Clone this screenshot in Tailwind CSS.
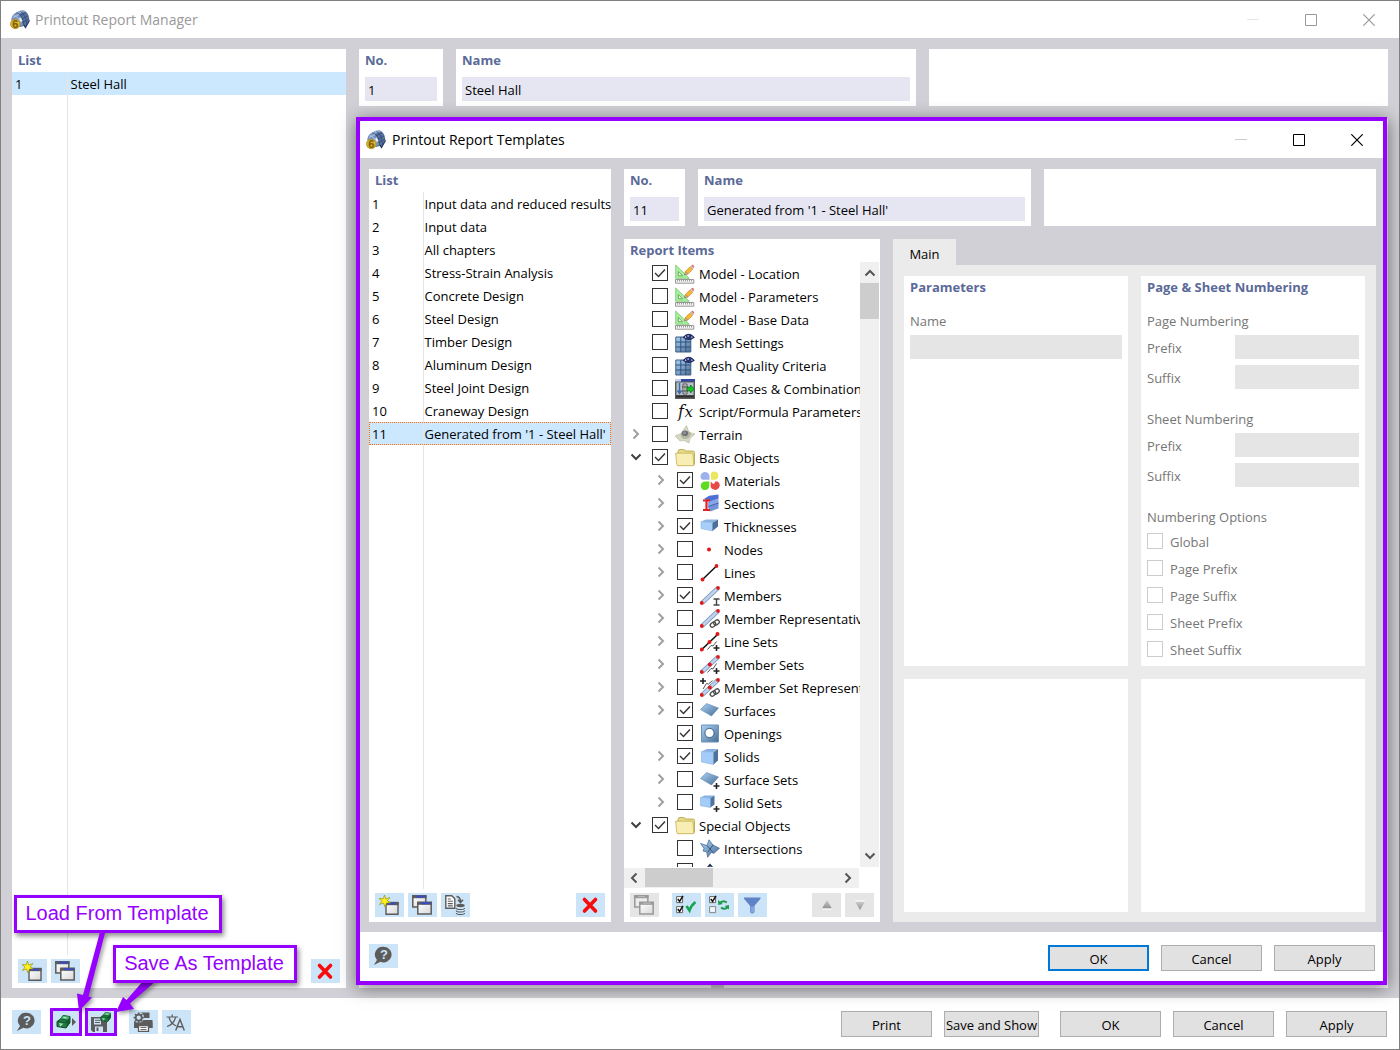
<!DOCTYPE html>
<html lang="en">
<head>
    <meta charset="UTF-8">
    <meta name="viewport" content="width=device-width, initial-scale=1.0">
    <title>Printout Report Manager</title>
    <script src="https://cdn.jsdelivr.net/npm/@tailwindcss/browser@4"></script>
</head>
<body class="font-['Open_Sans','Noto_Sans',sans-serif] text-[13px] leading-5 text-black">

<!-- Icons -->
<svg class="absolute size-0" aria-hidden="true">
    <defs>
        <linearGradient id="gBlue" x1="0" y1="0" x2="1" y2="1"><stop offset="0" stop-color="#a9d2f7"/><stop offset="1" stop-color="#4a6d92"/></linearGradient>
        <linearGradient id="gWin" x1="0" y1="0" x2="1" y2="1"><stop offset="0" stop-color="#ffffff"/><stop offset="1" stop-color="#d8d8d8"/></linearGradient>
        <linearGradient id="gGray" x1="0" y1="0" x2="0" y2="1"><stop offset="0" stop-color="#cfcfcf"/><stop offset="1" stop-color="#8f8f8f"/></linearGradient>
        <g id="link"><g fill="none" stroke="#4a4a4a" stroke-width="1.3"><rect x="10" y="13.600" width="6" height="4" rx="2" transform="rotate(-40 13 15.600)"/><rect x="13.500" y="11.500" width="6" height="4" rx="2" transform="rotate(-40 16.500 13.500)"/></g></g>
        <g id="plus"><path d="M16.500 13v6M13.500 16h6" stroke="#222" stroke-width="1.600"/></g>
        <symbol id="i-app" viewBox="0 0 20 20">
            <path d="M1.500 10Q2 4.500 6 2.700Q9.500 .2 14 .5Q18.500 2 19.500 10.500L15.500 17.500L14 16L10 17L2 11z" fill="#56719f"/>
            <path d="M1.500 10Q2 4.500 6 2.700Q11.500 3.500 13 15L10 16.500L3 12z" fill="#7793c0"/>
            <path d="M6 2.700Q9.500 .2 14 .5L16 1.800Q11.500 2.200 8.500 4.200z" fill="#8fabd4"/>
            <path d="M6.500 2.800Q12.500 4 14 15.500M10.500 1.200Q15.500 4.500 16.800 14.500M9.500 6l6.500-3.300M11.500 9.200l6.800-3.500M12.500 12.500l6.500-3.500" stroke="#34466b" stroke-width=".7" fill="none"/>
            <path d="M4 5.500Q9 7 10 13M3 7.500l6-3" stroke="#b9cdea" stroke-width=".8" fill="none"/>
            <path d="M10 8l1.500 3.500" stroke="#e6eefa" stroke-width="2"/>
            <path d="M14 15l1.500 2.500 4-7" fill="none" stroke="#2a3a5a" stroke-width="1.200"/>
            <circle cx="5.300" cy="14" r="5" fill="#dcb52f"/><circle cx="5.300" cy="14" r="4.700" fill="none" stroke="#a08018" stroke-width=".6"/>
            <text x="5.300" y="18" font-size="11" font-weight="700" text-anchor="middle" fill="#7a5c08" font-family="Liberation Sans, sans-serif">6</text>
        </symbol>
        <symbol id="i-model" viewBox="0 0 20 20">
            <path d="M.7 1v13.300h13.600z" fill="#a5f29a" stroke="#7cc275" stroke-width=".8"/><path d="M3.300 7.600v4.200h4.300z" fill="#fff" stroke="#5e9c58" stroke-width=".9"/>
            <path d="M.5 15.500h18.300v3.700H.5z" fill="#f4f4f4" stroke="#8c8c8c" stroke-width=".9"/><path d="M2.500 16v1.500M4.500 16v1.500M6.500 16v1.500M8.500 16v1.500M10.500 16v1.500M12.500 16v1.500M14.500 16v1.500M16.500 16v1.500" stroke="#777" stroke-width=".7"/>
            <path d="M9.300 11l1-3.500 2.700 2.600z" fill="#d9b48a" stroke="#5c4630" stroke-width=".4"/><path d="M10.300 7.500L15 2.700l2.700 2.600-4.700 4.800z" fill="#f7b733" stroke="#a8761a" stroke-width=".5"/>
            <path d="M15 2.700l1.200-1.200 2.700 2.600-1.200 1.200z" fill="#c9b9b9"/><path d="M16.200 1.500q1.200-1.200 2.400-.1t.3 2.700z" fill="#e66a6a"/>
        </symbol>
        <symbol id="i-mesh" viewBox="0 0 20 20">
            <path d="M.8 4h15v15h-15z" fill="url(#gBlue)" stroke="#3c5d86"/><path d="M5.800 4v15M10.800 4v15M.8 9h15M.8 14h15" stroke="#31517a" stroke-width="1"/>
            <path d="M8.500 4.300Q13.700-1.500 19 4.300Q13.700 8.500 8.500 4.300z" fill="#fff" stroke="#1b2354" stroke-width="1.200"/><circle cx="13.800" cy="3.700" r="2.800" fill="#27336f"/><circle cx="13.200" cy="3.100" r="1" fill="#8fa0e0"/>
        </symbol>
        <symbol id="i-load" viewBox="0 0 20 20">
            <path d="M0 0h20v20H0z" fill="#5c5c5c"/><path d="M1.500 3.500h17v12.500h-17z" fill="#b9c3cc"/><path d="M0 0h20v2.500H0z" fill="#3347a5"/><path d="M0 0h6v2.500H0z" fill="#c9d0e8"/>
            <path d="M4.500 4v10M2.500 11.500l2 3 2-3" stroke="#3a6ea5" stroke-width="1.500" fill="none"/><path d="M8 5h4v10H8z" fill="#e6e6e6" stroke="#333" stroke-width=".8"/><path d="M10 6v8M7 8h6M7 12h6" stroke="#333" stroke-width=".7"/>
            <path d="M12 8h3.500V6l4 4-4 4v-2H12z" fill="#12c427" stroke="#075c11" stroke-width=".6"/><path d="M1 17.500h18" stroke="#303030" stroke-width="2"/>
        </symbol>
        <symbol id="i-fx" viewBox="0 0 20 20"><text x="3" y="14.500" font-size="16" font-style="italic" fill="#111" font-family="DejaVu Serif, serif">f</text><text x="9.500" y="14.500" font-size="15" font-style="italic" fill="#111" font-family="DejaVu Serif, serif">x</text></symbol>
        <symbol id="i-terrain" viewBox="0 0 20 20">
            <path d="M0 11l6-2.500L11.500.5l2.500 7L20 9l-5 4.500L14 18l-5-2.500-4 .5z" fill="#d5d8c4" stroke="#b3b7a0" stroke-width=".6"/><path d="M5.500 10q2-5 7-4t3 4.500-5.500 3.500-4.500-4z" fill="#b2b6a0"/><ellipse cx="10" cy="8.300" rx="3.200" ry="2.800" fill="#6d7072"/><ellipse cx="9.500" cy="8" rx="1.500" ry="1.400" fill="#8c93a0"/>
        </symbol>
        <symbol id="i-folder" viewBox="0 0 20 20">
            <path d="M3 17.500V3.500q0-2 2-2h3.500q1.500 0 2 1.500H18q1.500 0 1.500 1.500v12z" fill="#e6d98a" stroke="#b9a94e" stroke-width=".9"/><path d="M.6 5.200h16.200q1 0 1.100 1l1 11.500H3q-1 0-1.200-1z" fill="#f8eeb4" stroke="#c8b95e" stroke-width=".9"/>
        </symbol>
        <symbol id="i-materials" viewBox="0 0 20 20">
            <path d="M2 8.800A4.500 4.500 0 1 1 9.500 6v2.800z" fill="#9db1ec"/><path d="M11 8.800V2.500Q11.500.5 14 .5a4.200 4.200 0 0 1 1 8.300z" fill="#ece659"/><path d="M9.300 10.500v4a4.300 4.300 0 1 1-4.200-4z" fill="#5fdc22"/><path d="M10.700 10.500l2.500 2.500q1.800-.5 2-2.500h2.300a4.500 4.500 0 1 1-6.800 3z" fill="#e84a48"/>
        </symbol>
        <symbol id="i-sections" viewBox="0 0 20 20">
            <path d="M4 5L9 1.800l9.500-1.300v4L10 8z" fill="#4f6fd6"/><path d="M8 8l10.500-3.500v6L8 13z" fill="#86a6e8"/><path d="M8 13l10.500-3.500v5L10 17.500z" fill="#7295d8"/><path d="M8.500 12.500l10-3.500" stroke="#3f5db8"/>
            <path d="M3 6.500h7M3 16h7M6.500 6v10" stroke="#e32222" stroke-width="2.200"/>
        </symbol>
        <symbol id="i-thick" viewBox="0 0 20 20">
            <path d="M1 4.500L6 2.500h12l-5.500 3.300z" fill="#8eb4e2"/><path d="M1 4.500l11.500 1.300v8.200L1 11.500z" fill="#a7cffc" stroke="#7fa8d8" stroke-width=".5"/><path d="M12.500 5.800L18 2.500v7L12.500 14z" fill="#4d6f98"/>
        </symbol>
        <symbol id="i-nodes" viewBox="0 0 20 20"><circle cx="9" cy="9.500" r="2" fill="#e01818"/></symbol>
        <symbol id="i-lines" viewBox="0 0 20 20"><path d="M2.500 16.500L16.500 3" stroke="#111" stroke-width="1.500"/><circle cx="2.500" cy="16.500" r="1.900" fill="#e01818"/><circle cx="16.500" cy="3" r="1.900" fill="#e01818"/></symbol>
        <symbol id="i-bar" viewBox="0 0 20 20"><path d="M2 17L18 2" stroke="#7088ad" stroke-width="4.400"/><path d="M2 17L18 2" stroke="#bdd3f0" stroke-width="3"/><circle cx="1.800" cy="17" r="1.900" fill="#e01818"/><circle cx="18" cy="1.900" r="1.900" fill="#e01818"/></symbol>
        <symbol id="i-members" viewBox="0 0 20 20"><use href="#i-bar" width="20" height="20"/><path d="M13.500 13h6M13.500 19h6M16.500 13v6" stroke="#444" stroke-width="1.400"/></symbol>
        <symbol id="i-memrep" viewBox="0 0 20 20"><use href="#i-bar" width="20" height="20"/><use href="#link"/></symbol>
        <symbol id="i-linesets" viewBox="0 0 20 20"><path d="M1.800 17.500L17.500 2.500" stroke="#111" stroke-width="1.600"/><path d="M7.500 17.500l3.500-4 2 .5 3.500-4.500" stroke="#555" stroke-width="1" fill="none"/><circle cx="1.800" cy="17.500" r="2" fill="#e01818"/><circle cx="9.500" cy="10" r="2" fill="#e01818"/><circle cx="17.500" cy="2" r="2" fill="#e01818"/><use href="#plus"/></symbol>
        <symbol id="i-memsets" viewBox="0 0 20 20"><use href="#i-bar" width="20" height="20"/><circle cx="9.800" cy="9.600" r="2" fill="#e01818"/><path d="M7.500 17.500l3.500-4 2 .5 3.500-5.500" stroke="#555" stroke-width="1" fill="none"/><use href="#plus"/></symbol>
        <symbol id="i-memsetrep" viewBox="0 0 20 20"><use href="#i-bar" width="20" height="20"/><circle cx="9.800" cy="9.600" r="2" fill="#e01818"/><path d="M3 0v6M0 3h6" stroke="#222" stroke-width="1.600"/><path d="M3 11l3.500-5.500 2 .5 4-3.500" stroke="#555" stroke-width="1" fill="none"/><use href="#link"/></symbol>
        <symbol id="i-surface" viewBox="0 0 20 20"><path d="M.5 8.500L6.500 2.500l12 4.500-7 8z" fill="url(#gBlue)" stroke="#5f86b4" stroke-width=".6"/></symbol>
        <symbol id="i-opening" viewBox="0 0 20 20"><path d="M1.500 1h17v17h-17z" fill="url(#gBlue)" stroke="#6d93bd"/><circle cx="9.500" cy="9" r="4.600" fill="#fff" stroke="#3f618a"/></symbol>
        <symbol id="i-solid" viewBox="0 0 20 20"><path d="M1.500 4.500L7 2h11l-4.500 3z" fill="#86b0e2"/><path d="M1.500 4.500l12 .7v12.300l-12-2.500z" fill="#a3ccfb" stroke="#7ba4d4" stroke-width=".5"/><path d="M13.500 5.200L18 2v11.500l-4.500 4z" fill="#4f739f"/></symbol>
        <symbol id="i-surfsets" viewBox="0 0 20 20"><use href="#i-surface" width="20" height="20"/><use href="#plus"/></symbol>
        <symbol id="i-solidsets" viewBox="0 0 20 20"><path d="M.5 4.500L4.500 2.500h10l-4 2.500z" fill="#86b0e2"/><path d="M.5 4.500l10 .5v9.500l-10-1.800z" fill="#a3ccfb" stroke="#7ba4d4" stroke-width=".5"/><path d="M10.500 5l4-2.500v9l-4 3z" fill="#4f739f"/><use href="#plus"/></symbol>
        <symbol id="i-inter" viewBox="0 0 20 20"><path d="M.5 4.500l6.500 2L9 .8l4 5.200 6.500 3.300-5.500 5-2.800-.8-3.500 4.800-1-5.300-3.700-1L4 9.500z" fill="url(#gBlue)" stroke="#3f638f" stroke-width=".7"/><path d="M7 6.500l6 7M8 13l5-7" stroke="#2f4f78" stroke-width=".9"/></symbol>
        <symbol id="i-next" viewBox="0 0 20 20"><path d="M10 1.500l-3 3.500h6z" fill="#222b40"/><path d="M10 4v12" stroke="#4b6fa0" stroke-width="3"/></symbol>

        <symbol id="b-new" viewBox="0 0 20 20"><path d="M7 8h12v11.300H7z" fill="url(#gWin)" stroke="#5b5b5b" stroke-width="1.400"/><path d="M6.300 6.800h13.400v3.400H6.300z" fill="#5b5b5b"/><path d="M8.500 7.500h8v2h-8z" fill="#3a4cc0"/><path d="M5.500 0l1.200 4 4.300-1.500L8.200 5.800l3.300 2-4 .2L6 12 4.500 8l-4 1.500L3 6.200 0 3.500l4.200.3z" fill="#fff21a" stroke="#8c8400" stroke-width=".6"/></symbol>
        <symbol id="b-copy" viewBox="0 0 20 20"><path d="M.8 1h13v11H.8z" fill="url(#gWin)" stroke="#5b5b5b" stroke-width="1.500"/><path d="M.1 0h14.500v3.200H.1z" fill="#5b5b5b"/><path d="M4 .6h9v2H4z" fill="#3a4cc0"/><path d="M5.800 8h13.400v11H5.800z" fill="url(#gWin)" stroke="#5b5b5b" stroke-width="1.500"/><path d="M5.100 6.500H20v3.300H5.100z" fill="#5b5b5b"/><path d="M9 7.200h9.500v2H9z" fill="#3a4cc0"/></symbol>
        <symbol id="b-copyoff" viewBox="0 0 20 20"><path d="M.8 1h13v11H.8z" fill="#ececec" stroke="#999" stroke-width="1.500"/><path d="M.1 0h14.500v3.200H.1z" fill="#999"/><path d="M5.800 8h13.400v11H5.800z" fill="url(#gWin)" stroke="#999" stroke-width="1.500"/><path d="M5.100 6.500H20v3.300H5.100z" fill="#999"/><path d="M4 1.600h7M9 8.200h8" stroke="#bbb"/></symbol>
        <symbol id="b-docdb" viewBox="0 0 20 20"><path d="M.8.8h6l3 3v9.500h-9z" fill="#fff" stroke="#5b5b5b" stroke-width="1.400"/><path d="M2.800 4h3M2.800 6.300h5M2.800 8.600h5M2.800 10.900h5" stroke="#5b5b5b" stroke-width="1.100"/><path d="M11.500 1.500q4 .5 4 5M13 4.800l2.500 2.800 2.500-2.800" fill="none" stroke="#5b5b5b" stroke-width="1.500"/><ellipse cx="15.500" cy="10.500" rx="4.200" ry="1.700" fill="#5b5b5b"/><path d="M11.300 13q0 1.500 4.200 1.500t4.200-1.500M11.300 15.500q0 1.500 4.200 1.500t4.200-1.500M11.300 18q0 1.500 4.200 1.500t4.200-1.500" fill="none" stroke="#5b5b5b" stroke-width="1.100"/></symbol>
        <symbol id="b-delete" viewBox="0 0 20 20"><path d="M4.500 4.500l11 11.500M15.500 4.500L4.500 16" stroke="#f60c0c" stroke-width="3.600" stroke-linecap="round"/></symbol>
        <symbol id="b-checkall" viewBox="0 0 20 20"><path d="M.6 1.600h6v6h-6zM.6 11.600h6v6h-6z" fill="#fff" stroke="#666"/><path d="M1.800 4l1.800 2.500L7 .8M1.800 14l1.800 2.500L7 10.800" fill="none" stroke="#111" stroke-width="1.500"/><path d="M10.500 11l3 4.500q1.500-5 6-8.500" fill="none" stroke="#14a550" stroke-width="2.600"/></symbol>
        <symbol id="b-toggle" viewBox="0 0 20 20"><path d="M.6 1.600h6v6h-6z" fill="#fff" stroke="#666"/><path d="M.6 11.600h6v6h-6z" fill="#eef4fa" stroke="#888"/><path d="M1.800 4l1.800 2.500L7 .8" fill="none" stroke="#111" stroke-width="1.500"/><path d="M10.300 8.500q3.500-4 7.500-1M19.500 11.500q-3.500 4-7.500 1" fill="none" stroke="#1a9c4c" stroke-width="2"/><path d="M9 5l.3 5 4.500-1zM20.500 15l-.3-5-4.500 1z" fill="#1a9c4c"/></symbol>
        <symbol id="b-filter" viewBox="0 0 20 20"><path d="M2 2.500h16.500v1.300l-6 7V17q-2.300 3-4.500 0v-6.200l-6-7z" fill="#5f83c4"/><path d="M8.500 11.500h3.500V17q-1.700 1.700-3.500 0z" fill="#86a6e2"/></symbol>
        <symbol id="b-up" viewBox="0 0 20 20"><path d="M10 5l5 8.500H5z" fill="url(#gGray)"/><path d="M5 14h10" stroke="#fff"/></symbol>
        <symbol id="b-down" viewBox="0 0 20 20"><path d="M10 15L5 6.500h10z" fill="url(#gGray)"/><path d="M5 6h10" stroke="#fff"/></symbol>
        <symbol id="b-help" viewBox="0 0 20 20"><path d="M10.800.8a8 7.800 0 1 1-3.300 15L.8 19l3.200-5A7.900 7.900 0 0 1 10.800.8z" fill="#5c5c5c"/><text x="11" y="13.400" font-size="13" font-weight="700" text-anchor="middle" fill="#cce4f7" font-family="Liberation Sans, sans-serif">?</text></symbol>
        <g id="brick"><path d="M1 8.500L4.500 6l2.500-3.500 7 1v6L10 15 1 13.500z" fill="#1f7c40" stroke="#0e4d26"/><path d="M4.500 6L7 2.700l7 1L11 7z" fill="#4fb374"/><path d="M10.500 9L14 4v6L10.500 14.500z" fill="#14572c"/><path d="M1.500 8.500l8.500 1M4.500 6l6.500 1v2" stroke="#0e4d26" stroke-width=".8" fill="none"/><path d="M3 10.800l3 .4-2.300 1.900M7.500 4.500l3 .5" stroke="#c9f0d4" stroke-width="1.100" fill="none"/></g>
        <symbol id="b-load" viewBox="0 0 20 20"><use href="#brick" x="0" y="1"/><path d="M16 6l4 4-4 4z" fill="#5c5c5c"/></symbol>
        <symbol id="b-save" viewBox="0 0 20 20"><path d="M0 5h11v3.500h5V20H2l-2-2z" fill="#5c5c5c"/><path d="M3 6.500h7v6H3z" fill="#cce4f7"/><path d="M4 8.300h5M4 10.500h5" stroke="#5c5c5c"/><path d="M4 14.500h8V20H4z" fill="#cce4f7"/><path d="M5.500 15.500h2V19h-2z" fill="#5c5c5c"/><g transform="translate(9 -1.500) scale(.75)"><use href="#brick"/></g></symbol>
        <symbol id="b-printer" viewBox="0 0 20 20"><path d="M7 .5h9.500V6H7z" fill="#5c5c5c"/><path d="M1 8h18.500v8H16v-3H5v3H1z" fill="#5c5c5c"/><circle cx="5.500" cy="5.500" r="5.500" fill="#cce4f7"/><path d="M1 10.500h18.500V16H16v-3H5v3H1z" fill="#5c5c5c"/><path d="M5.500 13.500h10v6h-10z" fill="#fff" stroke="#5c5c5c" stroke-width="1.300"/><path d="M7.500 15.500h6M7.500 17.500h6" stroke="#5c5c5c" stroke-width=".9"/><circle cx="5.700" cy="5.700" r="3" fill="none" stroke="#5c5c5c" stroke-width="1.800"/><path d="M5.700.6v1.800M5.700 9v1.800M.6 5.700h1.800M9 5.700h1.800M2.100 2.100l1.200 1.200M8.100 8.100l1.200 1.200M9.300 2.100L8.100 3.300M3.300 8.100L2.100 9.300" stroke="#5c5c5c" stroke-width="1.800"/></symbol>
        <symbol id="b-lang" viewBox="0 0 20 20"><path d="M.5 5h11.500M6.200 2.500V5M3 5.500q2 6.500 7.500 8.500M9.500 5.500Q8 12 1 14.500" fill="none" stroke="#5c5c5c" stroke-width="1.200"/><path d="M9.700 18.500l4.300-11 4.300 11M11.200 14.800h5.600" fill="none" stroke="#5c5c5c" stroke-width="1.400"/></symbol>
        <symbol id="c-min" viewBox="0 0 12 12"><path d="M0 5.500h12" stroke="currentColor"/></symbol>
        <symbol id="c-max" viewBox="0 0 12 12"><path d="M.5.5h11v11H.5z" fill="none" stroke="currentColor"/></symbol>
        <symbol id="c-close" viewBox="0 0 12 12"><path d="M.3.3l11.400 11.400M11.700.3L.3 11.700" stroke="currentColor" stroke-width="1.200"/></symbol>
        <symbol id="chev" viewBox="0 0 12 12"><path d="M3.500 1.500L8 6l-4.500 4.500" fill="none" stroke="currentColor" stroke-width="2"/></symbol>
    </defs>
</svg>

<div class="relative flex min-h-screen flex-col border border-[#808080] bg-white">

    <header class="flex h-[37px] items-center pr-1 pl-[9px]">
        <svg class="size-5"><use href="#i-app"/></svg>
        <h1 class="ml-[5px] flex-1 text-[14px] text-[#999]">Printout Report Manager</h1>
        <div class="flex gap-1.5 text-[#999]">
            <button class="grid h-[34px] w-[52px] place-items-center text-[#e5e5e5]" aria-label="Minimize"><svg class="size-3"><use href="#c-min"/></svg></button>
            <button class="grid h-[34px] w-[52px] place-items-center" aria-label="Maximize"><svg class="size-3"><use href="#c-max"/></svg></button>
            <button class="grid h-[34px] w-[52px] place-items-center" aria-label="Close"><svg class="size-3"><use href="#c-close"/></svg></button>
        </div>
    </header>

    <main class="flex flex-1 gap-[13px] bg-[#d1d0d6] px-[11px] pt-[11px] pb-2.5">
        <section class="flex w-[334px] flex-col bg-white">
            <h2 class="h-[23px] px-1.5 leading-[23px] font-bold text-[#5b6a98]">List</h2>
            <div class="flex flex-1">
                <table class="w-full table-fixed">
                    <tbody>
                        <tr class="h-[23px] bg-[#cce8ff]"><td class="w-[55px] pl-[3px]">1</td><td class="border-l border-[#e5e5e5] pl-[3px]">Steel Hall</td></tr>
                        <tr><td></td><td class="border-l border-[#e5e5e5]"></td></tr>
                    </tbody>
                </table>
            </div>
            <div class="flex gap-1 px-1.5 pt-1 pb-[5px]">
                <button class="grid h-6 w-[29px] place-items-center bg-[#cce4f7] pr-px" aria-label="New report"><svg class="size-5"><use href="#b-new"/></svg></button>
                <button class="grid h-6 w-[29px] place-items-center bg-[#cce4f7] pr-px" aria-label="Copy report"><svg class="size-5"><use href="#b-copy"/></svg></button>
                <button class="ml-auto grid h-6 w-[29px] place-items-center bg-[#cce4f7] pr-px" aria-label="Delete report"><svg class="size-5"><use href="#b-delete"/></svg></button>
            </div>
        </section>
        <div class="flex flex-1 flex-col gap-[13px]">
            <div class="grid grid-cols-[84px_1fr_1fr] gap-[13px]">
                <div class="bg-white px-1.5 pb-[5px]">
                    <label for="no" class="block h-7 leading-[23px] font-bold text-[#5b6a98]">No.</label>
                    <input id="no" type="text" value="1" class="block h-6 w-full bg-[#e6e6f2] pt-0.5 pl-[3px]">
                </div>
                <div class="bg-white px-1.5 pb-[5px]">
                    <label for="name" class="block h-7 leading-[23px] font-bold text-[#5b6a98]">Name</label>
                    <input id="name" type="text" value="Steel Hall" class="block h-6 w-full bg-[#e6e6f2] pt-0.5 pl-[3px]">
                </div>
                <div class="bg-white"></div>
            </div>
            <div class="flex flex-1 gap-[13px]">
                <div class="w-[352px] bg-white"></div>
                <div class="flex-1 bg-white"></div>
            </div>
        </div>
    </main>

    <footer class="flex h-[51px] items-center bg-white pr-3 pb-[3px] pl-[11px]">
        <button class="grid h-6 w-[29px] place-items-center bg-[#cce4f7] pr-px" aria-label="Help"><svg class="size-5"><use href="#b-help"/></svg></button>
        <button class="ml-[9px] grid h-7 w-8 place-items-center border-3 border-[#9600ff] bg-[#cce4f7]" aria-label="Load from template"><svg class="size-5"><use href="#b-load"/></svg></button>
        <button class="ml-[3px] grid h-7 w-8 place-items-center border-3 border-[#9600ff] bg-[#cce4f7]" aria-label="Save as template"><svg class="size-5"><use href="#b-save"/></svg></button>
        <button class="ml-3 grid h-6 w-[29px] place-items-center bg-[#cce4f7] pr-px" aria-label="Print settings"><svg class="size-5"><use href="#b-printer"/></svg></button>
        <button class="ml-1 grid h-6 w-[29px] place-items-center bg-[#cce4f7] pr-px" aria-label="Language"><svg class="size-5"><use href="#b-lang"/></svg></button>
        <div class="ml-auto flex gap-3 pt-1">
            <button class="h-[26px] w-[91px] border border-[#adadad] bg-[#e1e1e1] pt-0.5">Print</button>
            <button class="mr-[9px] h-[26px] w-[95px] border border-[#adadad] bg-[#e1e1e1] pt-0.5 whitespace-nowrap">Save and Show</button>
            <button class="h-[26px] w-[101px] border border-[#adadad] bg-[#e1e1e1] pt-0.5">OK</button>
            <button class="h-[26px] w-[101px] border border-[#adadad] bg-[#e1e1e1] pt-0.5">Cancel</button>
            <button class="h-[26px] w-[101px] border border-[#adadad] bg-[#e1e1e1] pt-0.5">Apply</button>
        </div>
    </footer>

    <!-- Templates dialog -->
    <div role="dialog" aria-labelledby="dlg-title" class="absolute top-[116px] right-3 bottom-16 left-[355px] flex flex-col border-4 border-[#9600ff] bg-white shadow-[1px_3px_16px_rgba(0,0,0,0.5)]">
        <header class="flex h-[37px] items-center pl-1.5">
            <svg class="size-5"><use href="#i-app"/></svg>
            <h1 id="dlg-title" class="ml-1.5 flex-1 text-[14px]">Printout Report Templates</h1>
            <div class="flex gap-1.5">
                <button class="grid h-[34px] w-[52px] place-items-center text-[#ccc]" aria-label="Minimize"><svg class="size-3"><use href="#c-min"/></svg></button>
                <button class="grid h-[34px] w-[52px] place-items-center" aria-label="Maximize"><svg class="size-3"><use href="#c-max"/></svg></button>
                <button class="grid h-[34px] w-[52px] place-items-center" aria-label="Close"><svg class="size-3"><use href="#c-close"/></svg></button>
            </div>
        </header>

        <div class="flex min-h-0 flex-1 gap-[13px] bg-[#d1d0d6] pt-[11px] pr-[7px] pb-2.5 pl-[9px]">
            <section class="flex w-[242px] flex-col bg-white">
                <h2 class="h-[23px] px-1.5 leading-[23px] font-bold text-[#5b6a98]">List</h2>
                <div class="flex flex-1">
                    <table class="w-full table-fixed">
                        <tbody id="templates"></tbody>
                    </table>
                </div>
                <div class="flex gap-1 px-1.5 pt-1 pb-[5px]">
                    <button class="grid h-6 w-[29px] place-items-center bg-[#cce4f7] pr-px" aria-label="New template"><svg class="size-5"><use href="#b-new"/></svg></button>
                    <button class="grid h-6 w-[29px] place-items-center bg-[#cce4f7] pr-px" aria-label="Copy template"><svg class="size-5"><use href="#b-copy"/></svg></button>
                    <button class="grid h-6 w-[29px] place-items-center bg-[#cce4f7] pr-px" aria-label="Save to database"><svg class="size-5"><use href="#b-docdb"/></svg></button>
                    <button class="ml-auto grid h-6 w-[29px] place-items-center bg-[#cce4f7] pr-px" aria-label="Delete template"><svg class="size-5"><use href="#b-delete"/></svg></button>
                </div>
            </section>

            <div class="flex min-h-0 min-w-0 flex-1 flex-col gap-[13px]">
                <div class="grid grid-cols-[61px_1fr_1fr] gap-[13px]">
                    <div class="bg-white px-1.5 pb-[5px]">
                        <label for="tno" class="block h-7 leading-[23px] font-bold text-[#5b6a98]">No.</label>
                        <input id="tno" type="text" value="11" class="block h-6 w-full bg-[#e6e6f2] pt-0.5 pl-[3px]">
                    </div>
                    <div class="bg-white px-1.5 pb-[5px]">
                        <label for="tname" class="block h-7 leading-[23px] font-bold text-[#5b6a98]">Name</label>
                        <input id="tname" type="text" value="Generated from '1 - Steel Hall'" class="block h-6 w-full bg-[#e6e6f2] pt-0.5 pl-[3px]">
                    </div>
                    <div class="bg-white"></div>
                </div>

                <div class="flex min-h-0 flex-1 gap-[13px]">
                    <section class="flex w-[256px] flex-col bg-white">
                        <h2 class="h-[23px] px-1.5 leading-[23px] font-bold text-[#5b6a98]">Report Items</h2>
                        <div class="flex min-h-0 flex-1 pr-px">
                            <ul id="tree" class="min-w-0 flex-1 overflow-hidden"></ul>
                            <div class="flex w-[19px] flex-col bg-[#f0f0f0]">
                                <button class="grid h-[21px] place-items-center text-[#555]" aria-label="Scroll up"><svg class="size-3 -rotate-90"><use href="#chev"/></svg></button>
                                <div class="h-9 bg-[#cdcdcd]"></div>
                                <button class="mt-auto grid h-[22px] place-items-center text-[#555]" aria-label="Scroll down"><svg class="size-3 rotate-90"><use href="#chev"/></svg></button>
                            </div>
                        </div>
                        <div class="mt-px mr-[21px] flex h-5 bg-[#f0f0f0]">
                            <button class="grid w-[21px] place-items-center pr-0.5 text-[#555]" aria-label="Scroll left"><svg class="size-3 rotate-180"><use href="#chev"/></svg></button>
                            <div class="h-[19px] w-[68px] bg-[#cdcdcd]"></div>
                            <button class="ml-auto grid w-[21px] place-items-center pr-0.5 text-[#555]" aria-label="Scroll right"><svg class="size-3"><use href="#chev"/></svg></button>
                        </div>
                        <div class="flex gap-1 px-1.5 py-[5px]">
                            <button class="mr-[9px] grid h-6 w-[29px] place-items-center bg-[#e5e5e5] pr-px" aria-label="Copy item" disabled><svg class="size-5"><use href="#b-copyoff"/></svg></button>
                            <button class="grid h-6 w-[29px] place-items-center bg-[#cce4f7] pr-px" aria-label="Check all"><svg class="size-5"><use href="#b-checkall"/></svg></button>
                            <button class="grid h-6 w-[29px] place-items-center bg-[#cce4f7] pr-px" aria-label="Invert selection"><svg class="size-5"><use href="#b-toggle"/></svg></button>
                            <button class="grid h-6 w-[29px] place-items-center bg-[#cce4f7] pr-px" aria-label="Filter"><svg class="size-5"><use href="#b-filter"/></svg></button>
                            <button class="ml-auto grid h-6 w-[29px] place-items-center bg-[#e5e5e5]" aria-label="Move up" disabled><svg class="size-5"><use href="#b-up"/></svg></button>
                            <button class="grid h-6 w-[29px] place-items-center bg-[#e5e5e5]" aria-label="Move down" disabled><svg class="size-5"><use href="#b-down"/></svg></button>
                        </div>
                    </section>

                    <section class="flex min-w-0 flex-1 flex-col">
                        <div class="flex"><button role="tab" class="h-[26px] w-[63px] bg-[#ebebeb] pt-1">Main</button></div>
                        <div class="grid flex-1 grid-cols-2 grid-rows-[390px_1fr] gap-[13px] bg-[#ebebeb] px-[11px] pt-[11px] pb-2.5 text-[#767676]">
                            <div class="bg-white px-1.5">
                                <h3 class="h-[23px] leading-[23px] font-bold text-[#5b6a98]">Parameters</h3>
                                <label for="pname" class="mt-3 block h-6">Name</label>
                                <input id="pname" type="text" class="block h-6 w-full bg-[#e5e5e5]" disabled>
                            </div>
                            <div class="bg-white px-1.5">
                                <h3 class="h-[23px] leading-[23px] font-bold text-[#5b6a98]">Page &amp; Sheet Numbering</h3>
                                <h4 class="mt-3 h-6">Page Numbering</h4>
                                <div class="flex flex-col gap-1.5">
                                    <div class="flex h-6"><label for="pp" class="w-[88px] leading-[26px]">Prefix</label><input id="pp" type="text" class="h-6 min-w-0 flex-1 bg-[#e5e5e5]" disabled></div>
                                    <div class="flex h-6"><label for="ps" class="w-[88px] leading-[26px]">Suffix</label><input id="ps" type="text" class="h-6 min-w-0 flex-1 bg-[#e5e5e5]" disabled></div>
                                </div>
                                <h4 class="mt-5 h-6">Sheet Numbering</h4>
                                <div class="flex flex-col gap-1.5">
                                    <div class="flex h-6"><label for="sp" class="w-[88px] leading-[26px]">Prefix</label><input id="sp" type="text" class="h-6 min-w-0 flex-1 bg-[#e5e5e5]" disabled></div>
                                    <div class="flex h-6"><label for="ss" class="w-[88px] leading-[26px]">Suffix</label><input id="ss" type="text" class="h-6 min-w-0 flex-1 bg-[#e5e5e5]" disabled></div>
                                </div>
                                <h4 class="mt-5 h-5">Numbering Options</h4>
                                <div id="options"></div>
                            </div>
                            <div class="bg-white"></div>
                            <div class="bg-white"></div>
                        </div>
                    </section>
                </div>
            </div>
        </div>

        <footer class="flex h-[49px] items-center bg-white pr-2 pb-px pl-[9px]">
            <button class="grid h-6 w-[29px] place-items-center bg-[#cce4f7] pr-px" aria-label="Help"><svg class="size-5"><use href="#b-help"/></svg></button>
            <div class="ml-auto flex gap-3 pt-1">
                <button class="h-[26px] w-[101px] border-2 border-[#0078d7] bg-[#e1e1e1] pt-0.5">OK</button>
                <button class="h-[26px] w-[101px] border border-[#adadad] bg-[#e1e1e1] pt-0.5">Cancel</button>
                <button class="h-[26px] w-[101px] border border-[#adadad] bg-[#e1e1e1] pt-0.5">Apply</button>
            </div>
        </footer>
    </div>

    <!-- Callouts -->
    <div class="absolute bottom-[116px] left-[13px] h-[38px] w-[208px] border-3 border-[#9600ff] bg-white pr-0.5 text-center font-['Liberation_Sans',sans-serif] text-[20px] leading-[30px] text-[#9600ff] shadow-[2px_3px_5px_rgba(0,0,0,0.45)]">Load From Template</div>
    <svg class="absolute bottom-[35px] left-[70px] h-[84px] w-[100px] drop-shadow-[2px_2px_2px_rgba(0,0,0,0.4)]" viewBox="0 0 100 84" fill="#9600ff" aria-hidden="true">
        <path d="M29 2l5 1L17.500 66.500l3.500 1L8 81 6 63.500l6 1.500z"/>
        <path d="M73 50h13L59 73.500l4 5.500L45 82l7-15 3.500 3z"/>
    </svg>
    <div class="absolute bottom-[66px] left-[112px] h-[38px] w-[184px] border-3 border-[#9600ff] bg-white pr-0.5 text-center font-['Liberation_Sans',sans-serif] text-[20px] leading-[30px] text-[#9600ff] shadow-[2px_3px_5px_rgba(0,0,0,0.45)]">Save As Template</div>
</div>

<script>
    var templates = ["Input data and reduced results", "Input data", "All chapters", "Stress-Strain Analysis", "Concrete Design", "Steel Design", "Timber Design", "Aluminum Design", "Steel Joint Design", "Craneway Design", "Generated from '1 - Steel Hall'"];

    // level, arrow (">" closed, "v" open), checked, icon, text
    var items = [
        [0, "", 1, "i-model", "Model - Location"],
        [0, "", 0, "i-model", "Model - Parameters"],
        [0, "", 0, "i-model", "Model - Base Data"],
        [0, "", 0, "i-mesh", "Mesh Settings"],
        [0, "", 0, "i-mesh", "Mesh Quality Criteria"],
        [0, "", 0, "i-load", "Load Cases &amp; Combinations"],
        [0, "", 0, "i-fx", "Script/Formula Parameters"],
        [0, ">", 0, "i-terrain", "Terrain"],
        [0, "v", 1, "i-folder", "Basic Objects"],
        [1, ">", 1, "i-materials", "Materials"],
        [1, ">", 0, "i-sections", "Sections"],
        [1, ">", 1, "i-thick", "Thicknesses"],
        [1, ">", 0, "i-nodes", "Nodes"],
        [1, ">", 0, "i-lines", "Lines"],
        [1, ">", 1, "i-members", "Members"],
        [1, ">", 0, "i-memrep", "Member Representatives"],
        [1, ">", 0, "i-linesets", "Line Sets"],
        [1, ">", 0, "i-memsets", "Member Sets"],
        [1, ">", 0, "i-memsetrep", "Member Set Representatives"],
        [1, ">", 1, "i-surface", "Surfaces"],
        [1, "", 1, "i-opening", "Openings"],
        [1, ">", 1, "i-solid", "Solids"],
        [1, ">", 0, "i-surfsets", "Surface Sets"],
        [1, ">", 0, "i-solidsets", "Solid Sets"],
        [0, "v", 1, "i-folder", "Special Objects"],
        [1, "", 0, "i-inter", "Intersections"],
        [1, "", 0, "i-next", ""]
    ];

    var options = ["Global", "Page Prefix", "Page Suffix", "Sheet Prefix", "Sheet Suffix"];

    document.getElementById("templates").innerHTML = templates.map(function (name, i) {
        var cls = i === 10 ? "h-[23px] bg-[#cce8ff] outline-1 -outline-offset-1 outline-dotted outline-orange-500" : "h-[23px]";
        return '<tr class="' + cls + '"><td class="w-[54px] pl-[3px]">' + (i + 1) + '</td><td class="border-l border-[#e5e5e5] pl-px whitespace-nowrap">' + name + '</td></tr>';
    }).join("") + '<tr><td></td><td class="border-l border-[#e5e5e5]"></td></tr>';

    document.getElementById("tree").innerHTML = items.map(function (item) {
        var arrow = "";
        if (item[1] === ">") arrow = '<svg class="size-3 text-[#a0a0a0]"><use href="#chev"/></svg>';
        if (item[1] === "v") arrow = '<svg class="size-3 rotate-90 text-[#404040]"><use href="#chev"/></svg>';
        return '<li class="flex h-[23px] items-center pb-px ' + (item[0] ? "pl-[29px]" : "pl-1") + '">' +
            '<span class="grid w-4 shrink-0 place-items-center">' + arrow + '</span>' +
            '<label class="ml-2 flex h-[22px] items-center whitespace-nowrap">' +
            '<span class="grid size-4 shrink-0">' +
            '<input type="checkbox" class="peer col-start-1 row-start-1 size-4 appearance-none border border-[#333] bg-white"' + (item[2] ? " checked" : "") + '>' +
            '<svg class="pointer-events-none col-start-1 row-start-1 hidden size-4 peer-checked:block" viewBox="0 0 16 16"><path d="M3 8l3.500 3.500L13 4.500" fill="none" stroke="#333" stroke-width="1.400"/></svg>' +
            '</span>' +
            '<svg class="mt-0.5 ml-[7px] size-5 shrink-0"><use href="#' + item[3] + '"/></svg>' +
            '<span class="ml-1 pt-0.5">' + item[4] + '</span></label></li>';
    }).join("");

    document.getElementById("options").innerHTML = options.map(function (name) {
        return '<label class="flex h-[27px] items-center gap-[7px]"><input type="checkbox" class="size-4 appearance-none border border-[#ccc] bg-white" disabled><span class="pt-0.5">' + name + '</span></label>';
    }).join("");
</script>
</body>
</html>
